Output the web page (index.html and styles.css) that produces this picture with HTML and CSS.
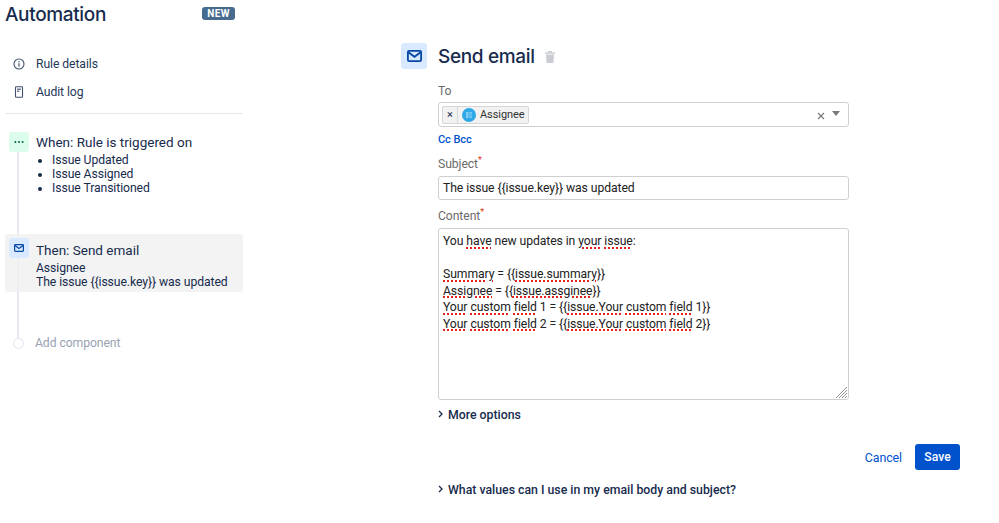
FILE: index.html
```html
<!DOCTYPE html>
<html lang="en">
<head>
    <meta charset="UTF-8">
    <title>Automation - Send email</title>
    <link rel="stylesheet" href="styles.css">
</head>
<body>
    <div class="page">
        <aside class="sidebar">
            <div class="sidebar-head">
                <h1>Automation</h1>
                <span class="badge">NEW</span>
            </div>
            <nav class="nav">
                <div class="nav-item">
                    <svg class="nav-icon" width="12" height="12" viewBox="0 0 12 12"><circle cx="6" cy="6" r="5" fill="none" stroke="#42526e" stroke-width="1.1"/><rect x="5.4" y="5.2" width="1.2" height="3.4" fill="#42526e"/><rect x="5.4" y="3.1" width="1.2" height="1.2" fill="#42526e"/></svg>
                    Rule details
                </div>
                <div class="nav-item">
                    <svg class="nav-icon" width="12" height="12" viewBox="0 0 12 12"><rect x="2.5" y="0.8" width="7" height="10.4" rx="0.8" fill="none" stroke="#42526e" stroke-width="1.1"/><rect x="4" y="2.6" width="4" height="1.1" fill="#42526e"/><rect x="4" y="4.6" width="2.4" height="1.1" fill="#42526e"/></svg>
                    Audit log
                </div>
            </nav>
            <div class="timeline">
                <div class="rail"></div>
                <div class="step step-when">
                    <div class="step-icon icon-green">
                        <svg width="10" height="4" viewBox="0 0 10 4"><circle cx="1.4" cy="2" r="1" fill="#006644"/><circle cx="5" cy="2" r="1" fill="#006644"/><circle cx="8.6" cy="2" r="1" fill="#006644"/></svg>
                    </div>
                    <div class="step-body">
                        <div class="step-title">When: Rule is triggered on</div>
                        <ul class="step-list">
                            <li>Issue Updated</li>
                            <li>Issue Assigned</li>
                            <li>Issue Transitioned</li>
                        </ul>
                    </div>
                </div>
                <div class="step step-then">
                    <div class="step-icon icon-blue">
                        <svg width="10" height="8" viewBox="0 0 10 8"><rect x="0.6" y="0.6" width="8.8" height="6.8" rx="0.8" fill="none" stroke="#0747a6" stroke-width="1.2"/><path d="M1 1.6 L5 4.6 L9 1.6" fill="none" stroke="#0747a6" stroke-width="1.2"/></svg>
                    </div>
                    <div class="step-body">
                        <div class="step-title">Then: Send email</div>
                        <div class="step-text">Assignee</div>
                        <div class="step-text">The issue {{issue.key}} was updated</div>
                    </div>
                </div>
                <div class="step step-add">
                    <div class="add-dot"></div>
                    <div class="add-text">Add component</div>
                </div>
            </div>
        </aside>

        <main class="main">
            <div class="main-head">
                <div class="main-icon">
                    <svg width="15" height="12" viewBox="0 0 15 12"><rect x="0.9" y="0.9" width="13.2" height="10.2" rx="1.2" fill="none" stroke="#0747a6" stroke-width="1.8"/><path d="M1.4 2.2 L7.5 6.8 L13.6 2.2" fill="none" stroke="#0747a6" stroke-width="1.8"/></svg>
                </div>
                <h2>Send email</h2>
                <svg class="trash" width="10" height="12" viewBox="0 0 10 12"><rect x="0" y="1.4" width="10" height="1.4" fill="#c9cdd3"/><rect x="3" y="0" width="4" height="1.6" fill="#c9cdd3"/><path d="M1 3.4 H9 L8.4 12 H1.6 Z" fill="#c9cdd3"/></svg>
            </div>
            <form class="form">
                <label class="field-label label-to">To</label>
                <div class="select">
                    <div class="tag">
                        <span class="tag-x">×</span>
                        <span class="tag-value">
                            <svg width="14" height="14" viewBox="0 0 14 14"><circle cx="7" cy="7" r="7" fill="#2ea8e6"/><rect x="4" y="4" width="6" height="6" fill="#7fcdf2"/><path d="M7 4 V10 M7 6 H10 M7 8 H10" stroke="#2ea8e6" stroke-width="0.7"/></svg>
                            Assignee
                        </span>
                    </div>
                    <svg class="select-clear" width="8" height="8" viewBox="0 0 8 8"><path d="M1 1 L7 7 M7 1 L1 7" stroke="#7a7a7a" stroke-width="1.2"/></svg>
                    <span class="select-caret"></span>
                </div>
                <div class="cc"><a>Cc</a> <a>Bcc</a></div>
                <label class="field-label label-subject">Subject<sup>*</sup></label>
                <div class="input">The issue {{issue.key}} was updated</div>
                <label class="field-label label-content">Content<sup>*</sup></label>
                <div class="textarea">
<div>You <u>have</u> new updates in <u>your</u> <u>issue</u>:</div>
<div>&nbsp;</div>
<div><u>Summary</u> = {{<u>issue.summary</u>}}</div>
<div><u>Assignee</u> = {{<u>issue.assginee</u>}}</div>
<div><u>Your</u> <u>custom</u> <u>field</u> 1 = {{<u>issue.Your</u> <u>custom</u> <u>field</u> 1}}</div>
<div><u>Your</u> <u>custom</u> <u>field</u> 2 = {{<u>issue.Your</u> <u>custom</u> <u>field</u> 2}}</div>
                    <svg class="grip" width="11" height="11" viewBox="0 0 11 11"><path d="M11 0 L0 11 M11 3 L3 11 M11 6 L6 11 M11 9 L9 11" stroke="#777" stroke-width="0.8"/></svg>
                </div>
                <div class="toggle toggle-more">
                    <svg width="5" height="8" viewBox="0 0 5 8"><path d="M1 1 L4 4 L1 7" fill="none" stroke="#172b4d" stroke-width="1.3"/></svg>
                    More options
                </div>
                <div class="actions">
                    <a class="cancel">Cancel</a>
                    <button type="button" class="save">Save</button>
                </div>
                <div class="toggle toggle-help">
                    <svg width="5" height="8" viewBox="0 0 5 8"><path d="M1 1 L4 4 L1 7" fill="none" stroke="#172b4d" stroke-width="1.3"/></svg>
                    What values can I use in my email body and subject?
                </div>
            </form>
        </main>
    </div>
</body>
</html>
```
FILE: styles.css
```css
html, body{
    margin: 0;
    background: #ffffff;
}
body{
    font-family: "Roboto", "Liberation Sans", sans-serif;
    color: #172b4d;
    font-size: 12.2px;
    letter-spacing: -0.08px;
    overflow: hidden;
}
.page{
    display: flex;
    height: 523px;
}
.sidebar{
    width: 238px;
    margin-left: 5px;
    flex-shrink: 0;
}
.sidebar-head{
    display: flex;
    justify-content: space-between;
    align-items: center;
    height: 20px;
    padding: 4px 8px 0 0;
}
.sidebar-head h1, .main-head h2{
    font-family: "Inter", "Liberation Sans", sans-serif;
    font-size: 19px;
    font-weight: 500;
    letter-spacing: -0.35px;
}
.sidebar-head h1{
    margin: 0;
}
.badge{
    background: #476b8f;
    color: #ffffff;
    font-size: 10px;
    font-weight: 700;
    letter-spacing: 0.4px;
    padding: 1px 5px;
    border-radius: 3px;
    margin-top: -2px;
}
.nav{
    margin-top: 26px;
    padding-bottom: 7px;
    border-bottom: 1px solid #e6e8ee;
}
.nav-item{
    display: flex;
    align-items: center;
    height: 28px;
    gap: 11px;
    padding-left: 8px;
    color: #253858;
}
.timeline{
    position: relative;
    padding-top: 18px;
}
.rail{
    position: absolute;
    left: 12px;
    top: 30px;
    width: 2px;
    height: 195px;
    background: #e8e9f3;
}
.step{
    display: flex;
    gap: 7px;
    position: relative;
}
.step-icon{
    width: 20px;
    height: 20px;
    border-radius: 3px;
    margin-left: 4px;
    display: flex;
    align-items: center;
    justify-content: center;
    flex-shrink: 0;
}
.icon-green{
    background: #dcfcec;
}
.icon-blue{
    background: #d9e9ff;
    margin-top: -2px;
}
.step-title{
    font-size: 13.5px;
    letter-spacing: 0;
    line-height: 21px;
}
.step-list{
    margin: 0;
    padding: 0 0 0 16px;
    line-height: 14px;
}
.step-then{
    margin-top: 39px;
    padding: 6px 0 2px;
    height: 50px;
    background: rgba(240, 240, 240, 0.8);
    border-radius: 3px;
}
.step-text{
    line-height: 14px;
}
.step-add{
    margin-top: 41px;
    align-items: center;
    height: 20px;
}
.add-dot{
    width: 11px;
    height: 11px;
    margin-left: 8px;
    margin-right: 4px;
    border: 1.5px solid #e2e4ef;
    border-radius: 50%;
    background: #ffffff;
    box-sizing: border-box;
}
.add-text{
    color: #98a2b3;
}
.main{
    margin-left: 158px;
    width: 560px;
}
.main-head{
    display: flex;
    align-items: center;
    margin-top: 43px;
    height: 26px;
}
.main-icon{
    width: 26px;
    height: 26px;
    border-radius: 3px;
    background: #d9e9ff;
    display: flex;
    align-items: center;
    justify-content: center;
}
.main-head h2{
    margin: 0 0 0 11px;
}
.trash{
    margin-left: 10px;
    margin-top: 2px;
}
.form{
    margin-left: 37px;
    width: 411px;
}
.field-label{
    display: block;
    color: #6b6b6b;
    line-height: 16px;
}
.field-label sup{
    color: #de350b;
    font-size: 9px;
    line-height: 0;
}
.label-to{
    margin-top: 14px;
}
.label-subject{
    margin-top: 10px;
}
.label-content{
    margin-top: 8px;
}
.select{
    display: flex;
    align-items: center;
    height: 23px;
    margin-top: 3px;
    padding-left: 3px;
    border: 1px solid #cfcfcf;
    border-radius: 3px;
    position: relative;
}
.tag{
    display: flex;
    height: 18px;
    border: 1px solid #d6d6d6;
    border-radius: 2px;
    background: #f2f2f2;
    font-size: 11px;
    align-items: center;
    box-sizing: border-box;
}
.tag-x{
    width: 14px;
    text-align: center;
    border-right: 1px solid #d6d6d6;
    line-height: 16px;
}
.tag-value{
    display: flex;
    align-items: center;
    gap: 4px;
    padding: 0 4px;
    color: #333333;
}
.select-clear{
    margin-left: auto;
    margin-top: 3px;
}
.select-caret{
    margin-left: 7px;
    margin-right: 8px;
    margin-top: -3px;
    border-left: 4.5px solid transparent;
    border-right: 4.5px solid transparent;
    border-top: 5px solid #7a7a7a;
}
.cc{
    margin-top: 6px;
    font-size: 11px;
    font-weight: 500;
    line-height: 13px;
    color: #0052cc;
}
.input{
    height: 22px;
    line-height: 22px;
    padding-left: 4px;
    margin-top: 4px;
    border: 1px solid #cfcfcf;
    border-radius: 3px;
    color: #222222;
}
.textarea{
    position: relative;
    height: 162px;
    margin-top: 4px;
    padding: 4px;
    border: 1px solid #cfcfcf;
    border-radius: 3px;
    line-height: 16.5px;
    color: #222222;
}
.textarea u{
    text-decoration: underline dotted #e5211d 1.5px;
    text-underline-offset: 2px;
}
.grip{
    position: absolute;
    right: 1px;
    bottom: 1px;
}
.toggle{
    display: flex;
    align-items: center;
    gap: 5px;
    font-size: 12.3px;
    font-weight: 500;
    letter-spacing: 0;
    line-height: 16px;
}
.toggle svg{
    margin-top: -3px;
}
.toggle-more{
    margin-top: 7px;
}
.actions{
    display: flex;
    align-items: center;
    justify-content: flex-end;
    gap: 13px;
    margin-top: 21px;
    margin-right: -111px;
}
.cancel{
    color: #0052cc;
    font-size: 12.4px;
}
.save{
    width: 45px;
    height: 26px;
    background: #0052cc;
    color: #ffffff;
    border: none;
    border-radius: 3px;
    font: inherit;
    font-weight: 500;
}
.toggle-help{
    margin-top: 12px;
    white-space: nowrap;
}
```
